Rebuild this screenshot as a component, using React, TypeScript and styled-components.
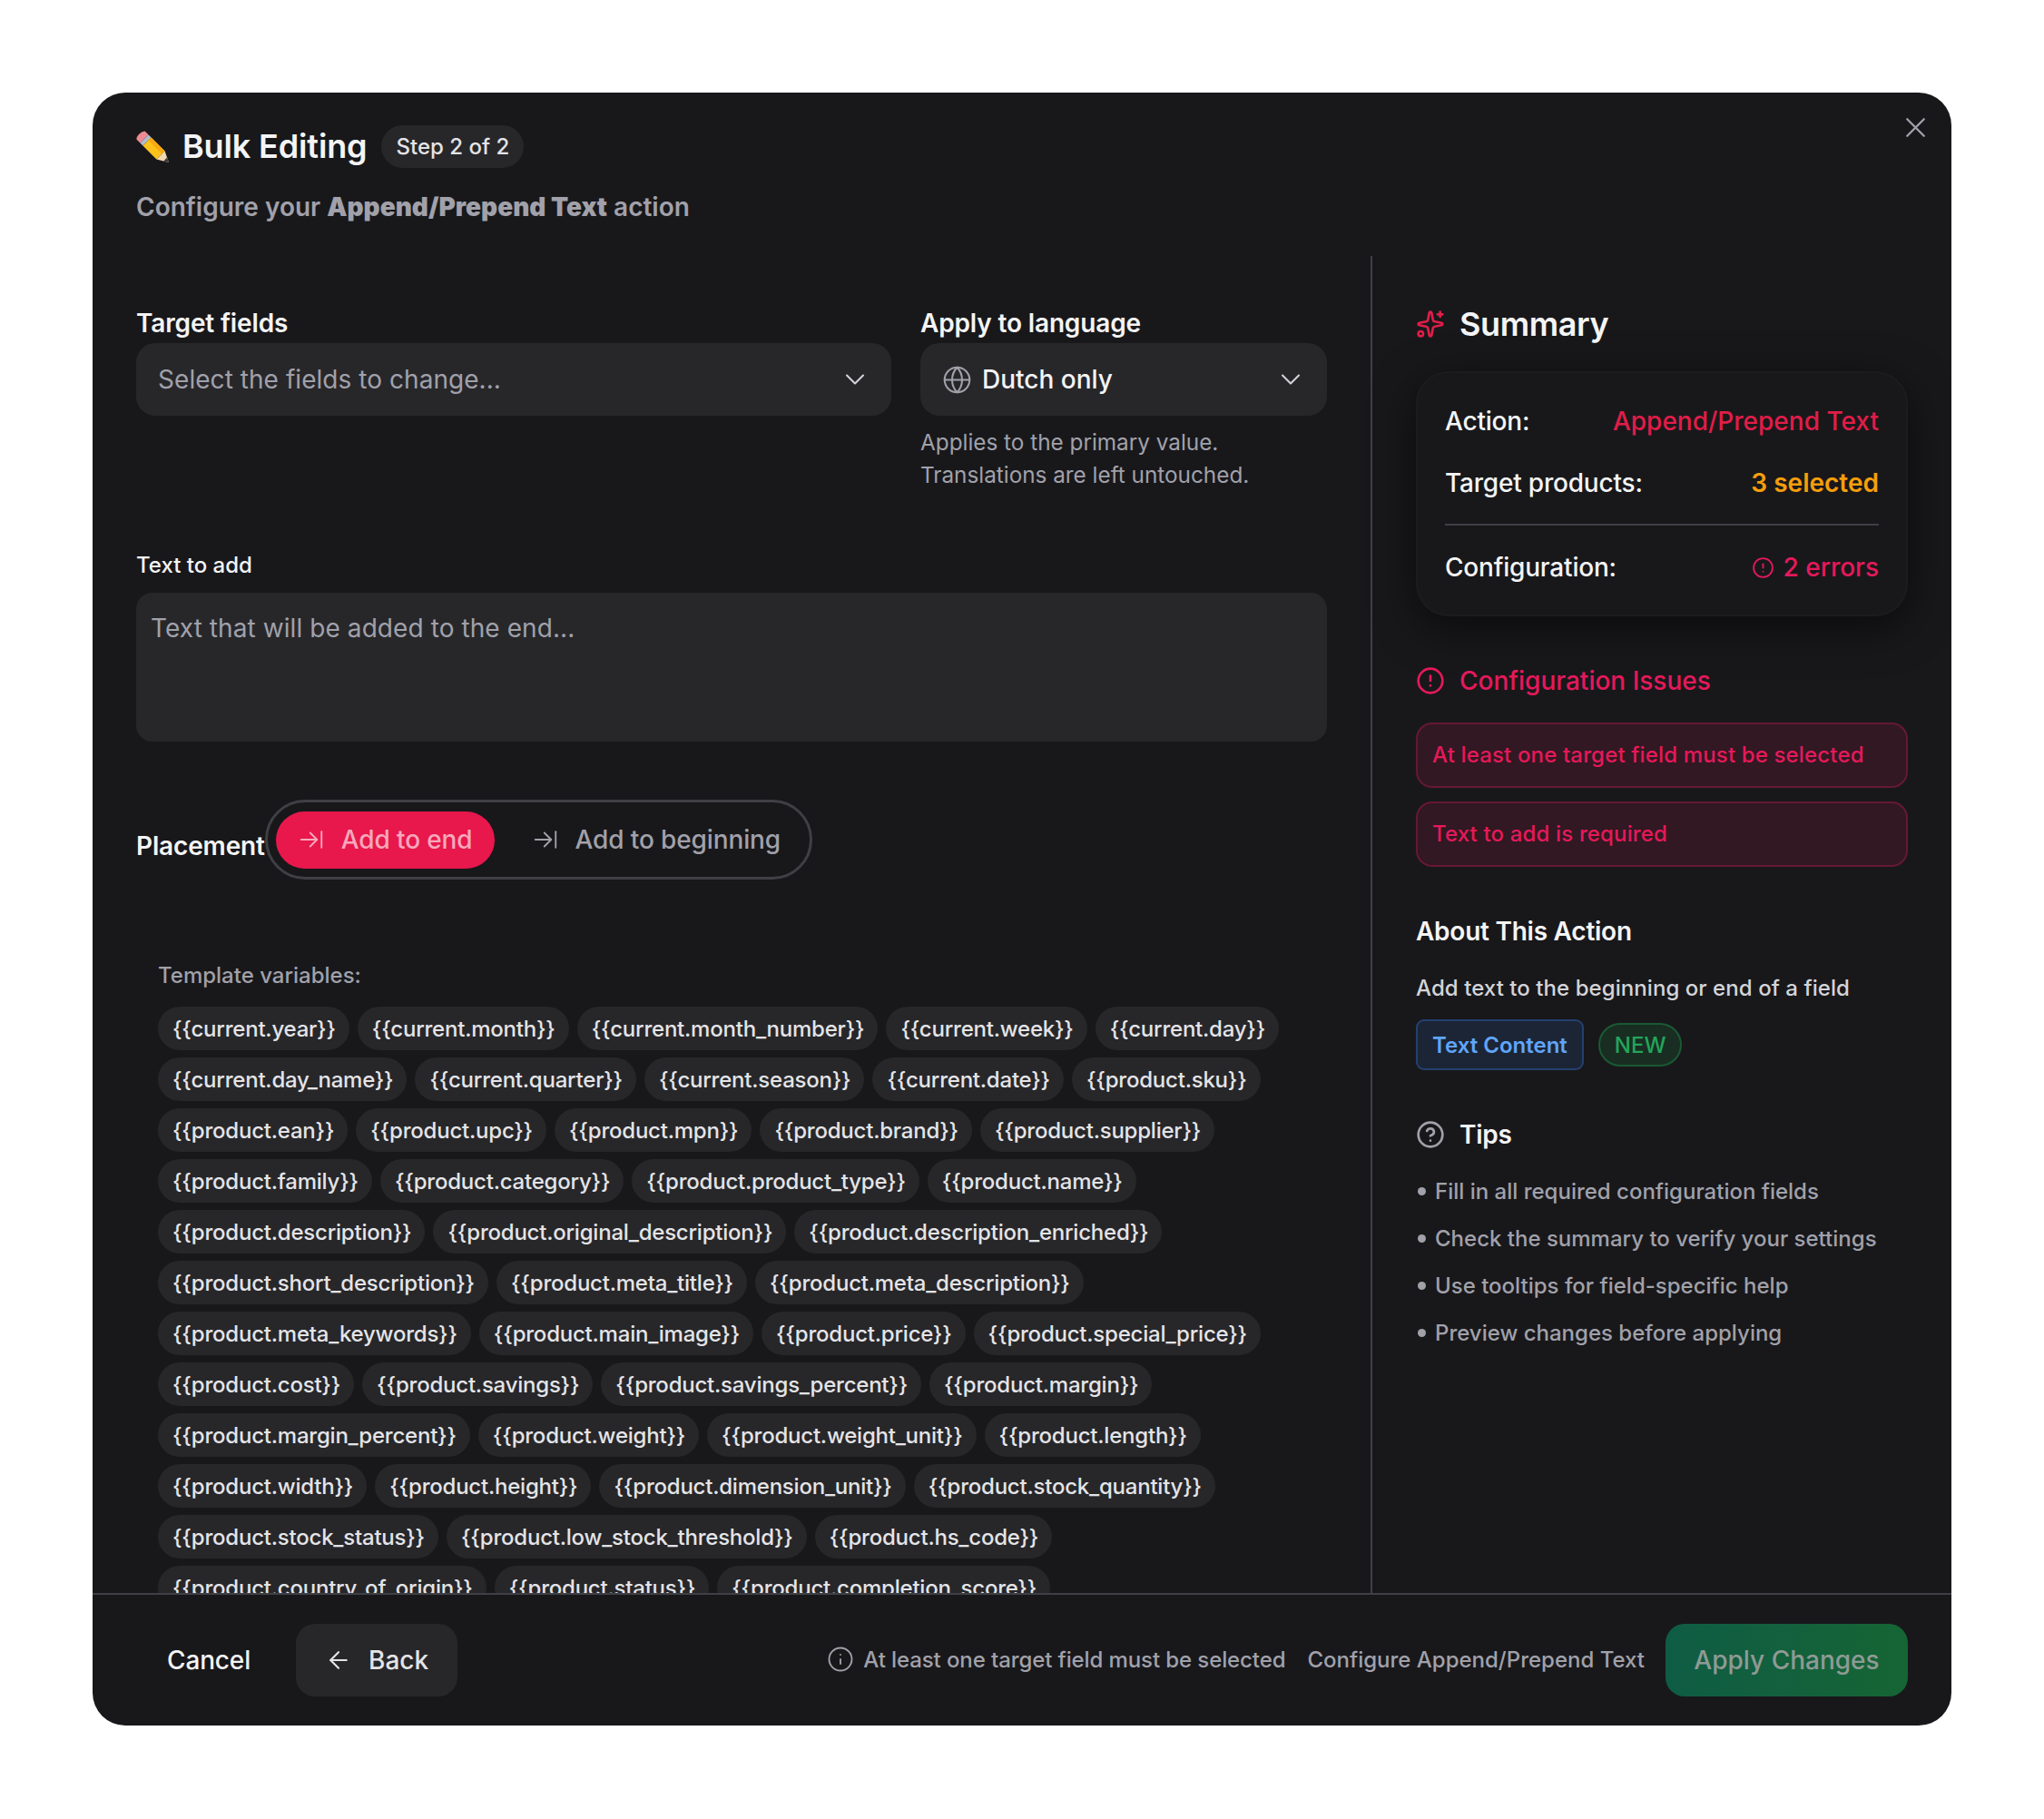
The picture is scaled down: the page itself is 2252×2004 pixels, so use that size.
import { createGlobalStyle, styled } from "styled-components";
import {
  ArrowLeft,
  ArrowRightToLine,
  ChevronDown,
  CircleAlert,
  CircleHelp,
  Globe,
  Info,
  Sparkles,
  X,
} from "lucide-react";

const VARIABLES = [
  "current.year", "current.month", "current.month_number", "current.week", "current.day",
  "current.day_name", "current.quarter", "current.season", "current.date", "product.sku",
  "product.ean", "product.upc", "product.mpn", "product.brand", "product.supplier",
  "product.family", "product.category", "product.product_type", "product.name",
  "product.description", "product.original_description", "product.description_enriched",
  "product.short_description", "product.meta_title", "product.meta_description",
  "product.meta_keywords", "product.main_image", "product.price", "product.special_price",
  "product.cost", "product.savings", "product.savings_percent", "product.margin",
  "product.margin_percent", "product.weight", "product.weight_unit", "product.length",
  "product.width", "product.height", "product.dimension_unit", "product.stock_quantity",
  "product.stock_status", "product.low_stock_threshold", "product.hs_code",
  "product.country_of_origin", "product.status", "product.completion_score",
];

const TIPS = [
  "Fill in all required configuration fields",
  "Check the summary to verify your settings",
  "Use tooltips for field-specific help",
  "Preview changes before applying",
];

const PencilEmoji = () => (
  <svg width="38" height="38" viewBox="0 0 38 38" fill="none">
    <path d="M9.6 1.4 L13.6 5.4 L4.4 14.6 L0.4 10.6 Q0 8 3 5 Q6 1.8 9.6 1.4 Z" fill="#ee8a92" />
    <path d="M13.6 5.4 L16.6 8.4 L7.4 17.6 L4.4 14.6 Z" fill="#aebdcc" />
    <path d="M16.6 8.4 L31.6 23.4 L22.4 32.6 L7.4 17.6 Z" fill="#fcc21b" />
    <path d="M16.6 8.4 L31.6 23.4 L28.4 26.6 L13.4 11.6 Z" fill="#f5a90f" />
    <path d="M31.6 23.4 L36 36 L22.4 32.6 Z" fill="#f3d9ae" />
    <path d="M34 30.5 L36 36 L30.2 34.5 Z" fill="#3c3c40" />
  </svg>
);

const App = () => {
  return (
    <>
      <GlobalStyle />
      <Page>
        <Modal>
          <CloseButton>
            <X size={37} strokeWidth={1.5} />
          </CloseButton>

          <Header>
            <TitleRow>
              <PencilEmoji />
              <Title>Bulk Editing</Title>
              <StepBadge>Step 2 of 2</StepBadge>
            </TitleRow>
            <Subtitle>
              Configure your <strong>Append/Prepend Text</strong> action
            </Subtitle>
          </Header>

          <Body>
            <MainColumn>
              <FieldGrid>
                <Field>
                  <FieldLabel>Target fields</FieldLabel>
                  <Select>
                    <Placeholder>Select the fields to change...</Placeholder>
                    <ChevronDown size={36} strokeWidth={1.4} color="#d4d4d8" />
                  </Select>
                </Field>
                <Field>
                  <FieldLabel>Apply to language</FieldLabel>
                  <Select>
                    <SelectValue>
                      <Globe size={33} strokeWidth={1.5} color="#a1a1aa" />
                      Dutch only
                    </SelectValue>
                    <ChevronDown size={36} strokeWidth={1.4} color="#d4d4d8" />
                  </Select>
                  <HelperText>
                    Applies to the primary value.
                    <br />
                    Translations are left untouched.
                  </HelperText>
                </Field>
              </FieldGrid>

              <TextLabel>Text to add</TextLabel>
              <TextArea>Text that will be added to the end...</TextArea>

              <PlacementRow>
                <PlacementLabel>Placement</PlacementLabel>
                <Segmented>
                  <Segment $active>
                    <ArrowRightToLine size={30} strokeWidth={1.5} />
                    Add to end
                  </Segment>
                  <Segment>
                    <ArrowRightToLine size={30} strokeWidth={1.5} />
                    Add to beginning
                  </Segment>
                </Segmented>
              </PlacementRow>

              <VariablesLabel>Template variables:</VariablesLabel>
              <Chips>
                {VARIABLES.map((name) => (
                  <Chip key={name}>{`{{${name}}}`}</Chip>
                ))}
              </Chips>
            </MainColumn>

            <SideColumn>
              <SummaryHeading>
                <Sparkles size={32} strokeWidth={2} color="#e11d48" />
                Summary
              </SummaryHeading>
              <SummaryCard>
                <SummaryRow>
                  <SummaryLabel>Action:</SummaryLabel>
                  <SummaryValue $color="#e11d48">Append/Prepend Text</SummaryValue>
                </SummaryRow>
                <SummaryRow>
                  <SummaryLabel>Target products:</SummaryLabel>
                  <SummaryValue $color="#f59e0b" $bold>3 selected</SummaryValue>
                </SummaryRow>
                <SummaryDivider />
                <SummaryRow>
                  <SummaryLabel>Configuration:</SummaryLabel>
                  <SummaryValue $color="#e5195a">
                    <CircleAlert size={25} strokeWidth={1.75} />2 errors
                  </SummaryValue>
                </SummaryRow>
              </SummaryCard>

              <IssuesHeading>
                <CircleAlert size={32} strokeWidth={2} />
                Configuration Issues
              </IssuesHeading>
              <IssueBox>At least one target field must be selected</IssueBox>
              <IssueBox>Text to add is required</IssueBox>

              <AboutHeading>About This Action</AboutHeading>
              <AboutText>Add text to the beginning or end of a field</AboutText>
              <BadgeRow>
                <CategoryBadge>Text Content</CategoryBadge>
                <NewBadge>NEW</NewBadge>
              </BadgeRow>

              <TipsHeading>
                <CircleHelp size={32} strokeWidth={2} color="#a1a1aa" />
                Tips
              </TipsHeading>
              <TipList>
                {TIPS.map((tip) => (
                  <Tip key={tip}>{tip}</Tip>
                ))}
              </TipList>
            </SideColumn>
          </Body>

          <Footer>
            <FooterSide>
              <CancelButton>Cancel</CancelButton>
              <BackButton>
                <ArrowLeft size={30} strokeWidth={1.75} />
                Back
              </BackButton>
            </FooterSide>
            <FooterSide>
              <FooterNote>
                <Info size={30} strokeWidth={1.5} />
                At least one target field must be selected
              </FooterNote>
              <FooterHint>Configure Append/Prepend Text</FooterHint>
              <ApplyButton>Apply Changes</ApplyButton>
            </FooterSide>
          </Footer>
        </Modal>
      </Page>
    </>
  );
};

export default App;

const GlobalStyle = createGlobalStyle`
  html, body {
    margin: 0;
    background: #ffffff;
    font-family: Inter, "Liberation Sans", sans-serif;
  }
  * {
    box-sizing: border-box;
  }
`;

const Page = styled.div`
  width: 2252px;
  height: 2004px;
  padding: 102px 102px 0;
`;

const Modal = styled.div`
  position: relative;
  width: 2048px;
  height: 1799px;
  display: flex;
  flex-direction: column;
  background: #18181b;
  border-radius: 36px;
  overflow: hidden;
  color: #f4f4f5;
`;

const CloseButton = styled.div`
  position: absolute;
  top: 20px;
  right: 21px;
  display: flex;
  color: #a1a1aa;
`;

const Header = styled.div`
  height: 180px;
  flex-shrink: 0;
  padding: 36px 48px 0;
`;

const TitleRow = styled.div`
  display: flex;
  align-items: center;
  height: 47px;
  gap: 13px;
`;

const Title = styled.h2`
  margin: 0 3px 0 0;
  font-size: 36px;
  font-weight: 600;
  letter-spacing: -0.14px;
  line-height: 47px;
`;

const StepBadge = styled.span`
  height: 47px;
  display: flex;
  align-items: center;
  padding: 0 16px;
  border-radius: 24px;
  background: #27272a;
  font-size: 24px;
  font-weight: 500;
  color: #e4e4e7;
`;

const Subtitle = styled.p`
  margin: 22px 0 0;
  font-size: 28px;
  line-height: 42px;
  font-weight: 600;
  color: #a1a1aa;
  strong {
    font-weight: 900;
  }
`;

const Body = styled.div`
  flex: 1;
  min-height: 0;
  display: flex;
`;

const MainColumn = styled.div`
  width: 1408px;
  flex-shrink: 0;
  padding: 56px 48px 0;
  overflow: hidden;
`;

const FieldGrid = styled.div`
  display: grid;
  grid-template-columns: 832px 448px;
  column-gap: 32px;
  height: 261px;
`;

const Field = styled.div`
  display: flex;
  flex-direction: column;
`;

const FieldLabel = styled.label`
  height: 40px;
  font-size: 28px;
  font-weight: 600;
  letter-spacing: -0.15px;
  line-height: 36px;
`;

const Select = styled.div`
  height: 80px;
  flex-shrink: 0;
  display: flex;
  align-items: center;
  justify-content: space-between;
  padding: 0 22px 0 24px;
  border-radius: 21px;
  background: #27272a;
`;

const Placeholder = styled.span`
  font-size: 28px;
  font-weight: 400;
  letter-spacing: 0.05px;
  color: #a1a1aa;
`;

const SelectValue = styled.span`
  display: flex;
  align-items: center;
  gap: 11px;
  font-size: 28px;
  font-weight: 500;
  color: #f4f4f5;
`;

const HelperText = styled.p`
  margin: 11px 0 0;
  font-size: 24.3px;
  line-height: 36px;
  color: #a1a1aa;
`;

const TextLabel = styled.label`
  display: block;
  margin-top: 6px;
  height: 48px;
  font-size: 24px;
  font-weight: 500;
  line-height: 36px;
`;

const TextArea = styled.div`
  height: 164px;
  padding: 19px 16px;
  border-radius: 18px;
  background: #27272a;
  font-size: 28px;
  letter-spacing: 0.08px;
  line-height: 40px;
  color: #a1a1aa;
`;

const PlacementRow = styled.div`
  display: flex;
  align-items: center;
  margin-top: 64px;
`;

const PlacementLabel = styled.label`
  margin-top: 14px;
  font-size: 28px;
  font-weight: 600;
  letter-spacing: -0.15px;
  line-height: 40px;
`;

const Segmented = styled.div`
  width: 603px;
  height: 88px;
  display: flex;
  align-items: center;
  gap: 17px;
  padding: 0 8px 0 9px;
  border: 3px solid #3f3f46;
  border-radius: 44px;
`;

const Segment = styled.div<{ $active?: boolean }>`
  height: 63px;
  display: flex;
  align-items: center;
  gap: 18px;
  padding: 0 24px;
  border-radius: 32px;
  white-space: nowrap;
  font-size: 28px;
  font-weight: 500;
  letter-spacing: -0.12px;
  background: ${(p) => (p.$active ? "#e8174c" : "transparent")};
  color: ${(p) => (p.$active ? "#f7a8bb" : "#a1a1aa")};
`;

const VariablesLabel = styled.div`
  margin: 88px 0 0 24px;
  height: 52px;
  font-size: 24px;
  font-weight: 500;
  line-height: 36px;
  color: #a1a1aa;
`;

const Chips = styled.div`
  display: flex;
  flex-wrap: wrap;
  gap: 8px 9px;
  margin-left: 24px;
  width: 1240px;
`;

const Chip = styled.span`
  height: 48px;
  display: flex;
  align-items: center;
  padding: 0 15px 0 16px;
  border-radius: 24px;
  background: #27272a;
  font-size: 24px;
  font-weight: 500;
  letter-spacing: -0.22px;
  color: #e4e4e7;
`;

const SideColumn = styled.div`
  flex: 1;
  padding: 53px 48px 0;
  border-left: 2px solid #3f3f46;
`;

const SummaryHeading = styled.h3`
  margin: 0;
  display: flex;
  align-items: center;
  gap: 16px;
  font-size: 36px;
  font-weight: 600;
  line-height: 44px;
  letter-spacing: -0.4px;
`;

const SummaryCard = styled.div`
  margin-top: 30px;
  height: 270px;
  padding: 31px 30px;
  border: 2px solid rgba(255, 255, 255, 0.02);
  border-radius: 36px;
  background: #18181b;
  box-shadow: 0 12px 48px rgba(0, 0, 0, 0.55);
`;

const SummaryRow = styled.div`
  height: 44px;
  margin-bottom: 23.5px;
  display: flex;
  align-items: center;
  justify-content: space-between;
  font-size: 28px;
  font-weight: 500;
  color: #f4f4f5;
`;

const SummaryLabel = styled.span`
  letter-spacing: -0.2px;
`;

const SummaryValue = styled.span<{ $color: string; $bold?: boolean }>`
  display: flex;
  align-items: center;
  gap: 10px;
  color: ${(p) => p.$color};
  font-weight: ${(p) => (p.$bold ? 600 : 500)};
`;

const SummaryDivider = styled.div`
  height: 2px;
  margin: 3.5px 0 24px;
  background: #3f3f46;
`;

const IssuesHeading = styled.h4`
  margin: 48.5px 0 24px;
  display: flex;
  align-items: center;
  gap: 16px;
  height: 44px;
  font-size: 28px;
  font-weight: 500;
  color: #e5195a;
`;

const IssueBox = styled.div`
  height: 72px;
  padding: 0 16px;
  display: flex;
  align-items: center;
  border: 2px solid rgba(229, 25, 90, 0.3);
  border-radius: 18px;
  background: rgba(229, 25, 90, 0.12);
  font-size: 24px;
  font-weight: 500;
  letter-spacing: 0.15px;
  color: #e5195a;
  & + & {
    margin-top: 15px;
  }
`;

const AboutHeading = styled.h4`
  margin: 52.5px 0 0;
  font-size: 28px;
  font-weight: 600;
  letter-spacing: -0.25px;
  line-height: 38px;
`;

const AboutText = styled.p`
  margin: 25px 0 0;
  font-size: 24px;
  font-weight: 500;
  letter-spacing: 0.06px;
  line-height: 38px;
  color: #d4d4d8;
`;

const BadgeRow = styled.div`
  display: flex;
  align-items: center;
  gap: 16px;
  margin-top: 15px;
`;

const CategoryBadge = styled.span`
  height: 56px;
  display: flex;
  align-items: center;
  padding: 0 16px;
  border: 2px solid rgba(59, 130, 246, 0.3);
  border-radius: 9px;
  background: rgba(59, 130, 246, 0.12);
  font-size: 24px;
  font-weight: 600;
  color: #60a5fa;
`;

const NewBadge = styled.span`
  height: 48px;
  display: flex;
  align-items: center;
  padding: 0 16px;
  border: 2px solid rgba(34, 197, 94, 0.3);
  border-radius: 24px;
  background: rgba(34, 197, 94, 0.12);
  font-size: 24px;
  font-weight: 500;
  color: #22a55a;
`;

const TipsHeading = styled.h4`
  margin: 49px 0 0;
  display: flex;
  align-items: center;
  gap: 16px;
  height: 44px;
  font-size: 28px;
  font-weight: 600;
  letter-spacing: -0.25px;
`;

const TipList = styled.ul`
  margin: 14px 0 0;
  padding: 0;
  list-style: none;
`;

const Tip = styled.li`
  display: flex;
  align-items: center;
  gap: 10px;
  height: 52px;
  font-size: 24px;
  font-weight: 500;
  color: #a1a1aa;
  &::before {
    content: "";
    width: 9px;
    height: 9px;
    border-radius: 50%;
    background: #a1a1aa;
    margin-left: 2px;
  }
`;

const Footer = styled.div`
  height: 146px;
  flex-shrink: 0;
  display: flex;
  align-items: center;
  justify-content: space-between;
  padding: 0 48px 0 49px;
  border-top: 2px solid #3f3f46;
`;

const FooterSide = styled.div`
  display: flex;
  align-items: center;
`;

const CancelButton = styled.div`
  padding: 0 50px 0 33px;
  font-size: 28px;
  font-weight: 500;
  letter-spacing: -0.15px;
`;

const BackButton = styled.div`
  height: 80px;
  display: flex;
  align-items: center;
  gap: 18px;
  padding: 0 32px;
  border-radius: 21px;
  background: #27272a;
  font-size: 28px;
  font-weight: 500;
  color: #e4e4e7;
`;

const FooterNote = styled.span`
  display: flex;
  align-items: center;
  gap: 10px;
  margin-bottom: 2px;
  font-size: 24px;
  font-weight: 500;
  letter-spacing: -0.1px;
  color: #a1a1aa;
`;

const FooterHint = styled.span`
  margin: 0 23px 2px 24px;
  font-size: 24px;
  font-weight: 500;
  color: #a1a1aa;
`;

const ApplyButton = styled.div`
  width: 267px;
  height: 80px;
  display: flex;
  align-items: center;
  justify-content: center;
  border-radius: 21px;
  background: linear-gradient(90deg, #0f5c45, #166534);
  font-size: 28px;
  font-weight: 500;
  color: #8f9a94;
`;
